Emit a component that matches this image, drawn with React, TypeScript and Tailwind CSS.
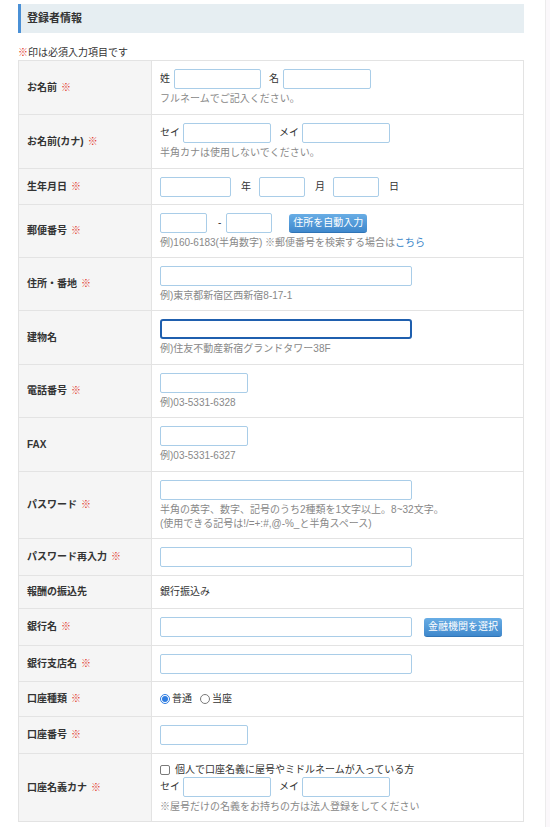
import React from "react";

const FONT = "font-['Liberation_Sans','Noto_Sans_CJK_JP',sans-serif]";

function Req() {
  return <span className="ml-[4px] font-normal text-[#e2362a]">※</span>;
}

function Field({ w, focused }: { w: string; focused?: boolean }) {
  const base = "block h-[20px] shrink-0 bg-white outline-none";
  const edge = focused
    ? "border-2 border-[#1f5fae] rounded-[3px]"
    : "border border-[#a9cde8] rounded-[2px]";
  return <input type="text" className={`${base} ${edge} ${w}`} />;
}

function Hint({ children }: { children: React.ReactNode }) {
  return <p className="mt-[3px] text-[10px] leading-[14px] text-[#888]">{children}</p>;
}

function BlueButton({ children, className = "" }: { children: React.ReactNode; className?: string }) {
  return (
    <button
      type="button"
      className={`block h-[19px] shrink-0 rounded-[3px] border-b border-[#2f74b6] bg-linear-to-b from-[#68ade5] to-[#3f88cc] px-[4px] text-[10px] leading-[18px] text-white ${className}`}
    >
      {children}
    </button>
  );
}

function Row({
  label,
  req,
  pad = "pt-[8px] pb-[8px]",
  children,
}: {
  label: string;
  req?: boolean;
  pad?: string;
  children: React.ReactNode;
}) {
  return (
    <div className="flex border-b border-[#e3e3e3] last:border-b-0">
      <div className="flex w-[133px] shrink-0 items-center border-r border-[#e3e3e3] bg-[#f5f5f5] pl-[8px] text-[10px] leading-[14px] font-bold text-[#333]">
        <span>
          {label}
          {req && <Req />}
        </span>
      </div>
      <div className={`flex flex-1 flex-col justify-center pl-[8px] pr-[8px] ${pad}`}>
        {children}
      </div>
    </div>
  );
}

function KanaPair() {
  return (
    <div className="flex h-[20px] items-center text-[10px] leading-[14px] text-[#333]">
      <span className="mr-[3px]">セイ</span>
      <Field w="w-[88px]" />
      <span className="ml-[8px] mr-[3px]">メイ</span>
      <Field w="w-[88px]" />
    </div>
  );
}

function Radio({ checked, label }: { checked?: boolean; label: string }) {
  return (
    <span className="flex items-center">
      {checked ? (
        <span className="flex h-[10px] w-[10px] items-center justify-center rounded-full border border-[#2f7de1] bg-white">
          <span className="h-[6px] w-[6px] rounded-full bg-[#2f7de1]" />
        </span>
      ) : (
        <span className="h-[10px] w-[10px] rounded-full border border-[#7a7a7a] bg-white" />
      )}
      <span className="ml-[2px]">{label}</span>
    </span>
  );
}

export default function App() {
  return (
    <div className={`flex min-h-[827px] w-[550px] bg-white ${FONT}`}>
      <main className="w-[545px] shrink-0 pl-[18px] pt-[4px]">
        <div className="flex h-[29px] w-[506px] items-center border-l-[3px] border-[#4a90d6] bg-[#e6eef2] pl-[6px]">
          <h2 className="text-[11px] font-bold text-[#333]">登録者情報</h2>
        </div>

        <p className="mt-[13px] text-[10px] leading-[14px] text-[#333]">
          <span className="text-[#e2362a]">※</span>印は必須入力項目です
        </p>

        <div className="w-[506px] border border-[#e3e3e3]">
          <Row label="お名前" req>
            <div className="flex h-[20px] items-center text-[10px] leading-[14px] text-[#333]">
              <span className="mr-[4px]">姓</span>
              <Field w="w-[87px]" />
              <span className="ml-[8px] mr-[4px]">名</span>
              <Field w="w-[88px]" />
            </div>
            <Hint>フルネームでご記入ください。</Hint>
          </Row>

          <Row label="お名前(カナ)" req>
            <KanaPair />
            <Hint>半角カナは使用しないでください。</Hint>
          </Row>

          <Row label="生年月日" req pad="pt-[8px] pb-[7px]">
            <div className="flex h-[20px] items-center text-[10px] leading-[14px] text-[#333]">
              <Field w="w-[71px]" />
              <span className="ml-[10px] mr-[8px]">年</span>
              <Field w="w-[46px]" />
              <span className="ml-[10px] mr-[8px]">月</span>
              <Field w="w-[46px]" />
              <span className="ml-[10px]">日</span>
            </div>
          </Row>

          <Row label="郵便番号" req pad="pt-[8px] pb-[7px]">
            <div className="flex h-[20px] items-center text-[10px] leading-[14px] text-[#333]">
              <Field w="w-[47px]" />
              <span className="ml-[11px] mr-[5px]">-</span>
              <Field w="w-[46px]" />
              <BlueButton className="ml-[17px]">住所を自動入力</BlueButton>
            </div>
            <Hint>
              例)160-6183(半角数字) ※郵便番号を検索する場合は
              <span className="text-[#3a86c8]">こちら</span>
            </Hint>
          </Row>

          <Row label="住所・番地" req pad="pt-[8px] pb-[7px]">
            <Field w="w-[252px]" />
            <Hint>例)東京都新宿区西新宿8-17-1</Hint>
          </Row>

          <Row label="建物名">
            <Field w="w-[252px]" focused />
            <Hint>例)住友不動産新宿グランドタワー38F</Hint>
          </Row>

          <Row label="電話番号" req pad="pt-[8px] pb-[7px]">
            <Field w="w-[88px]" />
            <Hint>例)03-5331-6328</Hint>
          </Row>

          <Row label="FAX">
            <Field w="w-[88px]" />
            <Hint>例)03-5331-6327</Hint>
          </Row>

          <Row label="パスワード" req pad="pt-[8px] pb-[7px]">
            <Field w="w-[252px]" />
            <Hint>
              半角の英字、数字、記号のうち2種類を1文字以上。8~32文字。
              <br />
              (使用できる記号は!/=+:#,@-%_と半角スペース)
            </Hint>
          </Row>

          <Row label="パスワード再入力" req>
            <Field w="w-[252px]" />
          </Row>

          <Row label="報酬の振込先">
            <p className="text-[10px] leading-[16px] text-[#333]">銀行振込み</p>
          </Row>

          <Row label="銀行名" req>
            <div className="flex h-[20px] items-center">
              <Field w="w-[252px]" />
              <BlueButton className="ml-[12px]">金融機関を選択</BlueButton>
            </div>
          </Row>

          <Row label="銀行支店名" req pad="pt-[8px] pb-[7px]">
            <Field w="w-[252px]" />
          </Row>

          <Row label="口座種類" req>
            <div className="flex h-[18px] items-center gap-[8px] text-[10px] leading-[14px] text-[#333]">
              <Radio checked label="普通" />
              <Radio label="当座" />
            </div>
          </Row>

          <Row label="口座番号" req>
            <Field w="w-[88px]" />
          </Row>

          <Row label="口座名義カナ" req pad="pt-[8px] pb-[7px]">
            <div className="flex h-[15px] items-center text-[10px] leading-[14px] text-[#333]">
              <span className="h-[10px] w-[10px] rounded-[2px] border border-[#7a7a7a] bg-white" />
              <span className="ml-[5px]">個人で口座名義に屋号やミドルネームが入っている方</span>
            </div>
            <KanaPair />
            <Hint>※屋号だけの名義をお持ちの方は法人登録をしてください</Hint>
          </Row>
        </div>
      </main>
      <aside className="flex-1 border-l border-[#ececec] bg-[#fbf8fb]" />
    </div>
  );
}
